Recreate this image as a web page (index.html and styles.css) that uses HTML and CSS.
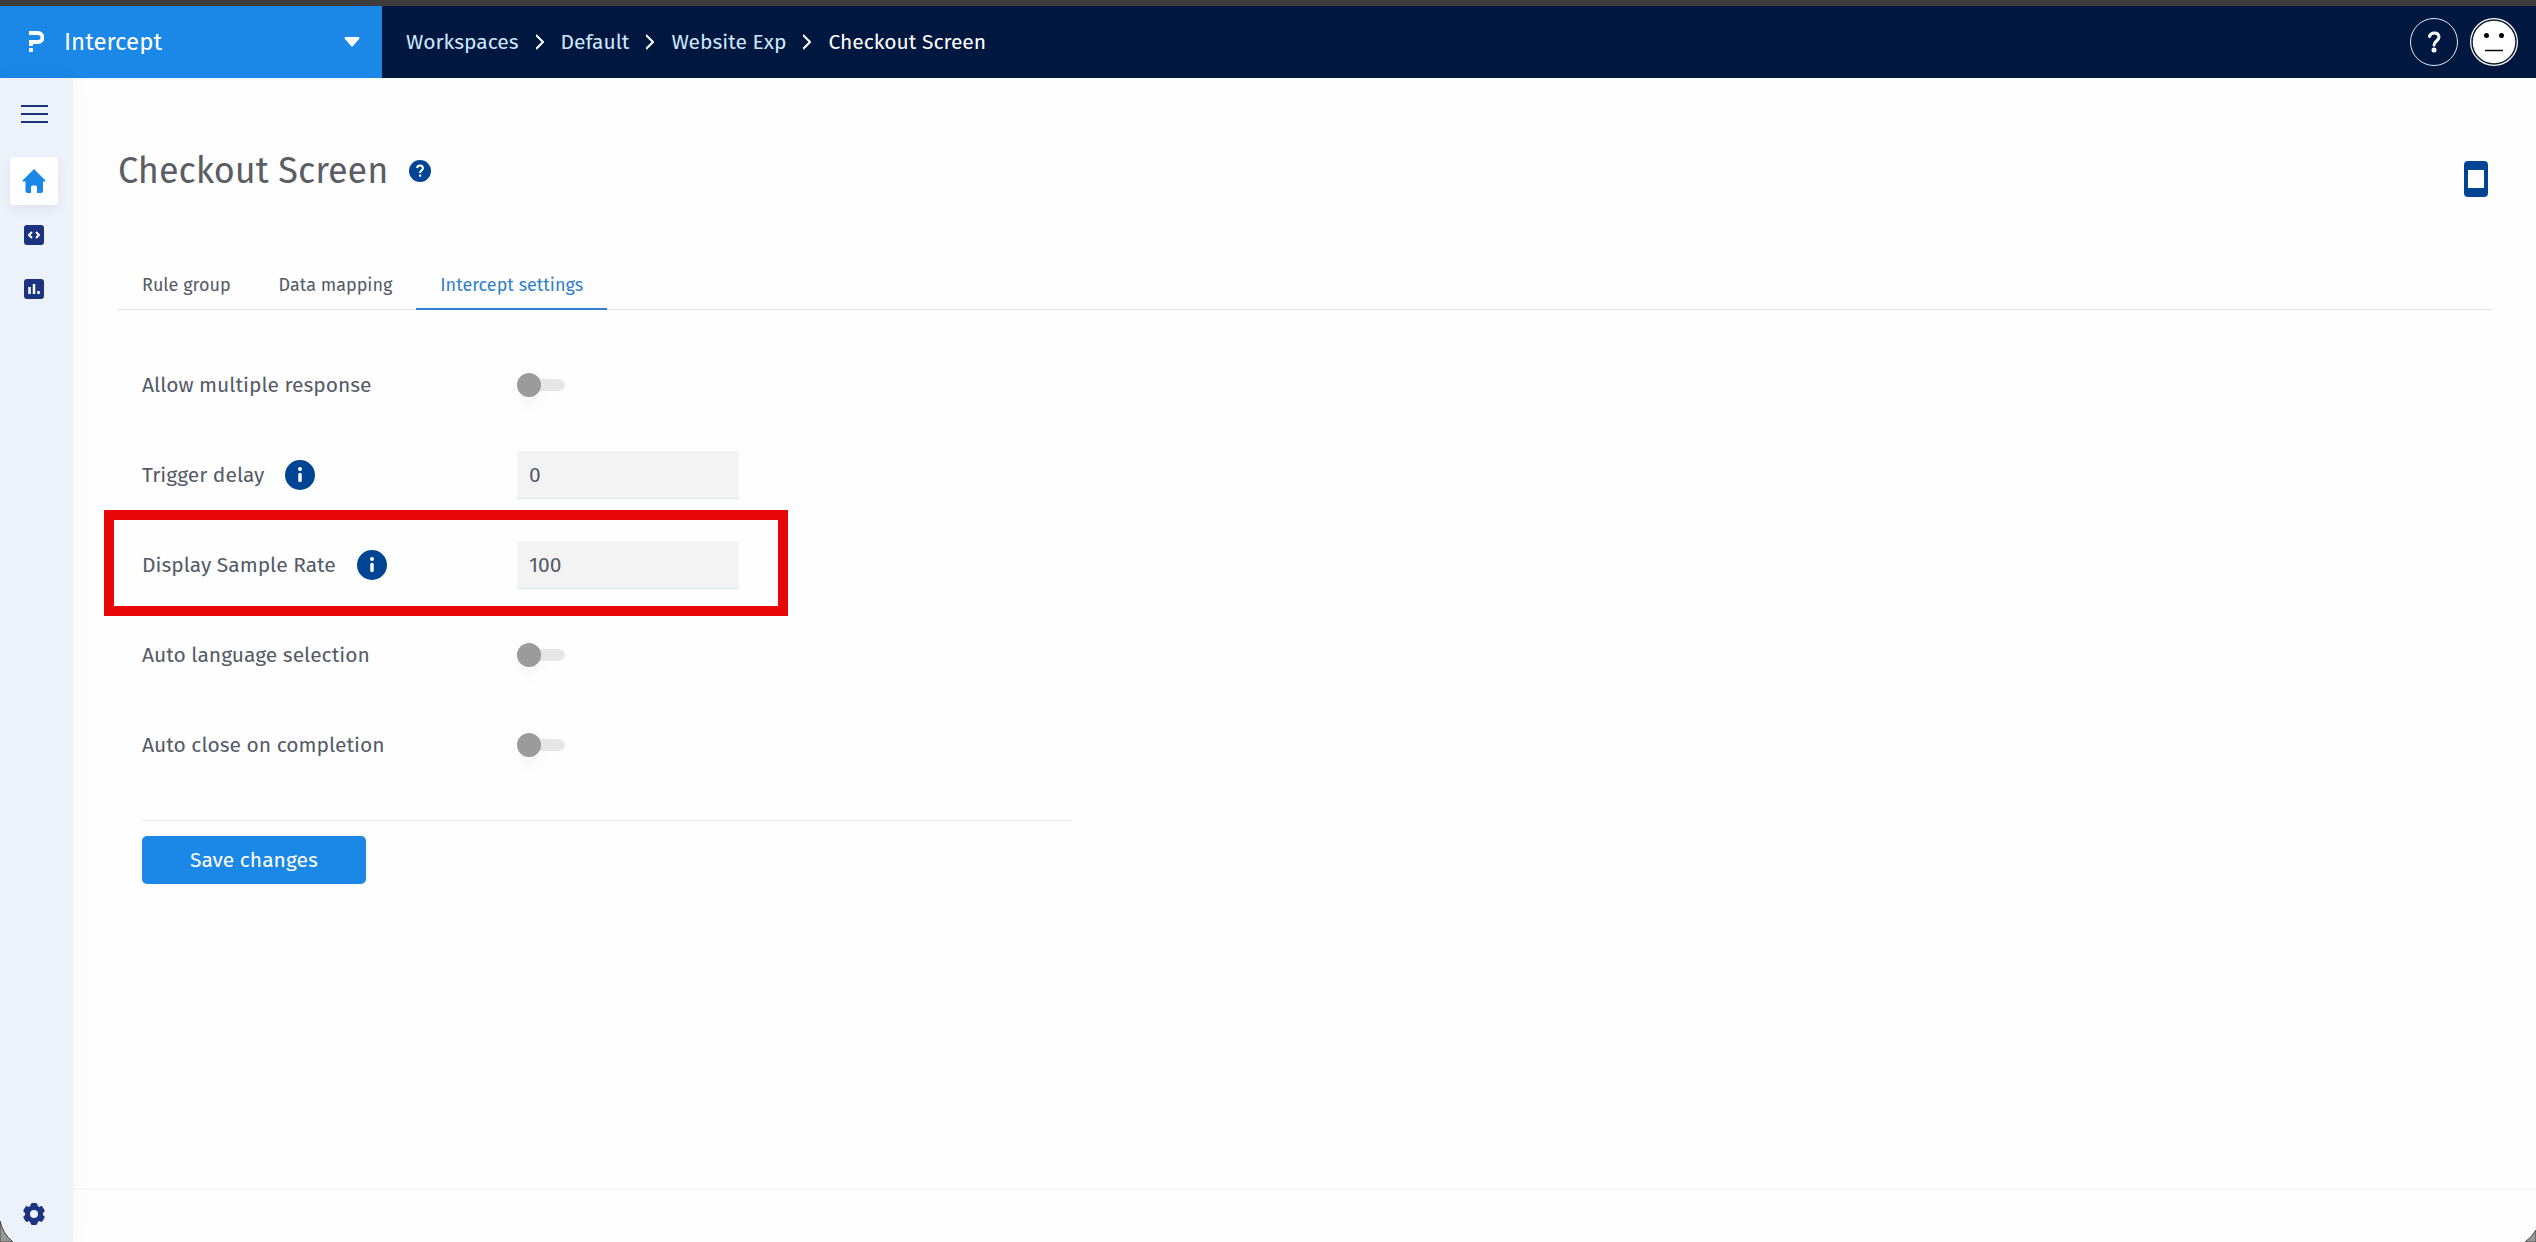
FILE: index.html
```html
<!DOCTYPE html>
<html lang="en">
<head>
<meta charset="utf-8">
<title>Checkout Screen - Intercept settings</title>
<link rel="stylesheet" href="styles.css">
</head>
<body>
<header class="topbar">
  <div class="product">
    <svg class="product-logo" width="16" height="22" viewBox="0 0 16 22" aria-hidden="true"><path d="M1 2h9a4 4 0 0 1 0 9H3v4" fill="none" stroke="#fff" stroke-width="4"/><rect x="1" y="17" width="4" height="4" rx="1" fill="#fff"/></svg>
    <select class="product-select" aria-label="Product"><option>Intercept</option></select>
    <svg class="product-caret" width="16" height="10" viewBox="0 0 16 10" aria-hidden="true"><path d="M1 0h14q1 1 0 2L9 9q-1 1-2 0L1 2Q0 1 1 0z" fill="#fff"/></svg>
  </div>
  <nav class="crumbs" aria-label="Breadcrumb">
    <a href="#">Workspaces</a>
    <svg class="chevron" width="8" height="16" viewBox="0 0 8 16" aria-hidden="true"><path d="M0 1l7 7-7 7"/></svg>
    <a href="#">Default</a>
    <svg class="chevron" width="8" height="16" viewBox="0 0 8 16" aria-hidden="true"><path d="M0 1l7 7-7 7"/></svg>
    <a href="#">Website Exp</a>
    <svg class="chevron" width="8" height="16" viewBox="0 0 8 16" aria-hidden="true"><path d="M0 1l7 7-7 7"/></svg>
    <a class="current" href="#" aria-current="page">Checkout Screen</a>
  </nav>
  <div class="account">
    <button class="icon-button" type="button" aria-label="Help">
      <svg width="48" height="48" viewBox="0 0 48 48"><circle cx="24" cy="24" r="23.500" fill="none" stroke="#dfe8f8"/><path d="M19.500 18.500q1-3.500 5-3.500 4 0 4.500 4c0 4-5 4-5 8" fill="none" stroke="#fff" stroke-width="3" stroke-linecap="round"/><circle cx="24" cy="32" r="2.500" fill="#fff"/></svg>
    </button>
    <button class="icon-button" type="button" aria-label="Account">
      <svg width="48" height="48" viewBox="0 0 48 48"><circle cx="24" cy="24" r="24" fill="#fff"/><circle cx="24" cy="24" r="22" fill="#fff" stroke="#10182c" stroke-width="1.500"/><circle cx="16.500" cy="17.500" r="2.500"/><circle cx="31.500" cy="17.500" r="2.500"/><path d="M15 32.500h18" stroke="#000" stroke-width="1.500"/></svg>
    </button>
  </div>
</header>
<div class="shell">
  <nav class="sidebar" aria-label="Main">
    <button class="menu-button" type="button" aria-label="Menu">
      <svg width="28" height="18" viewBox="0 0 28 18"><path d="M0 1h27M0 9h27M0 17h27" stroke="#1b3478" stroke-width="2"/></svg>
    </button>
    <a class="side-link active" href="#" aria-label="Home">
      <svg width="24" height="24" viewBox="0 0 24 24"><path d="M12 0L.5 11.500Q0 12.500 1 12.500h2.500V22q0 2 2 2H9v-6q0-1.500 1.500-1.500h3Q15 16.500 15 18v6h4q2 0 2-2v-9.500h2q1 0 .5-1z" fill="#1b87e6"/></svg>
    </a>
    <a class="side-link" href="#" aria-label="Code">
      <svg width="20" height="20" viewBox="0 0 20 20"><rect width="20" height="20" rx="3" fill="#1b3380"/><path d="M8 7l-3 3 3 3M12 7l3 3-3 3" fill="none" stroke="#fff" stroke-width="2"/></svg>
    </a>
    <a class="side-link" href="#" aria-label="Reports">
      <svg width="20" height="20" viewBox="0 0 20 20"><rect width="20" height="20" rx="3" fill="#1b3380"/><path d="M5.500 8v7M10 5v10M14.500 12v3" stroke="#fff" stroke-width="2.500"/></svg>
    </a>
    <a class="side-link settings" href="#" aria-label="Settings">
      <svg width="22" height="22" viewBox="0 0 22 22"><g fill="#1b3380"><circle cx="11" cy="11" r="9"/><rect x="7.500" y="0" width="7" height="22" rx="2"/><rect x="7.500" y="0" width="7" height="22" rx="2" transform="rotate(60 11 11)"/><rect x="7.500" y="0" width="7" height="22" rx="2" transform="rotate(120 11 11)"/></g><circle cx="11" cy="11" r="4" fill="#eef2fb"/></svg>
    </a>
  </nav>
  <div class="page">
    <main class="content">
      <div class="title-row">
        <h1>Checkout Screen</h1>
        <button class="icon-button" type="button" aria-label="About this screen">
          <svg width="22" height="22" viewBox="0 0 22 22"><circle cx="11" cy="11" r="11" fill="#004593"/><path d="M8 8q.5-2.500 3-2.500T14 8c0 2.500-3 2.500-3 5" fill="none" stroke="#fff" stroke-width="2"/><rect x="10" y="14.500" width="2.200" height="2.200" fill="#fff"/></svg>
        </button>
        <button class="icon-button device" type="button" aria-label="Mobile preview">
          <svg width="24" height="36" viewBox="0 0 24 36"><rect width="24" height="36" rx="4" fill="#004593"/><rect x="4" y="9" width="16" height="18" fill="#fff"/></svg>
        </button>
      </div>
      <nav class="tabs" aria-label="Sections">
        <a href="#">Rule group</a>
        <a href="#">Data mapping</a>
        <a class="active" href="#" aria-current="page">Intercept settings</a>
      </nav>
      <form class="settings-form">
        <div class="row">
          <div class="caption"><label for="multi">Allow multiple response</label></div>
          <input class="toggle" id="multi" type="checkbox">
        </div>
        <div class="row">
          <div class="caption"><label for="delay">Trigger delay</label>
            <button class="icon-button" type="button" aria-label="About trigger delay"><svg width="30" height="30" viewBox="0 0 30 30"><circle cx="15" cy="15" r="15" fill="#004593"/><circle cx="15" cy="9" r="2" fill="#fff"/><path d="M15 14.500v6" stroke="#fff" stroke-width="3.500" stroke-linecap="round"/></svg></button>
          </div>
          <input class="field" id="delay" type="text" value="0">
        </div>
        <div class="row highlighted">
          <div class="caption"><label for="rate">Display Sample Rate</label>
            <button class="icon-button" type="button" aria-label="About display sample rate"><svg width="30" height="30" viewBox="0 0 30 30"><circle cx="15" cy="15" r="15" fill="#004593"/><circle cx="15" cy="9" r="2" fill="#fff"/><path d="M15 14.500v6" stroke="#fff" stroke-width="3.500" stroke-linecap="round"/></svg></button>
          </div>
          <input class="field" id="rate" type="text" value="100">
        </div>
        <div class="row">
          <div class="caption"><label for="lang">Auto language selection</label></div>
          <input class="toggle" id="lang" type="checkbox">
        </div>
        <div class="row">
          <div class="caption"><label for="close">Auto close on completion</label></div>
          <input class="toggle" id="close" type="checkbox">
        </div>
        <div class="actions"><button class="save" type="submit">Save changes</button></div>
      </form>
    </main>
    <footer class="footer"></footer>
  </div>
</div>
<svg class="corner corner-left" width="14" height="22" viewBox="0 0 14 22" aria-hidden="true"><path d="M0 1Q3 14 13 22H0z" fill="#999" stroke="#444"/></svg>
<svg class="corner corner-right" width="12" height="12" viewBox="0 0 12 12" aria-hidden="true"><path d="M12 0Q8 7 1 12H12z" fill="#999" stroke="#444"/></svg>
</body>
</html>
```
FILE: styles.css
```css
*, *::before, *::after { box-sizing: border-box; }

body {
  margin: 0;
  min-height: 100vh;
  display: flex;
  flex-direction: column;
  position: relative;
  border-top: 6px solid #3f3d3c;
  background: #fefefe;
  color: #545b67;
  font-family: "Fira Sans", Roboto, sans-serif;
  font-size: 21px;
  line-height: 24px;
}

a { color: inherit; text-decoration: none; }
svg { display: block; flex: none; }

.icon-button {
  flex: none;
  padding: 0;
  border: 0;
  background: none;
}

/* Top bar */
.topbar {
  display: flex;
  height: 72px;
  background: #001740;
}
.product {
  display: flex;
  align-items: center;
  width: 382px;
  padding: 0 22px 0 28px;
  background: #1b87e6;
}
.product-select {
  flex: 1;
  margin-left: 20px;
  padding: 0;
  border: 0;
  appearance: none;
  background: none;
  color: #fff;
  font: inherit;
  font-size: 24px;
}
.crumbs {
  display: flex;
  align-items: center;
  gap: 17px;
  padding-left: 24px;
  color: #cfe6ff;
}
.crumbs .current { color: #fff; }
.chevron { fill: none; stroke: #fff; stroke-width: 2; }
.account {
  display: flex;
  align-items: center;
  gap: 12px;
  margin-left: auto;
  padding-right: 18px;
}

/* Side navigation */
.shell { display: flex; flex: 1; }
.sidebar {
  display: flex;
  flex-direction: column;
  gap: 6px;
  width: 73px;
  padding: 27px 0 4px 10px;
  background: #edf1fa;
  box-shadow: 0 0 24px rgba(30, 50, 90, 0.04);
}
.menu-button {
  margin-bottom: 28px;
  padding: 0 0 0 11px;
  border: 0;
  background: none;
}
.side-link {
  display: flex;
  align-items: center;
  justify-content: center;
  width: 48px;
  height: 48px;
  border-radius: 4px;
}
.side-link.active {
  background: #fff;
  box-shadow: 0 4px 12px rgba(30, 50, 90, 0.08);
}
.side-link.settings { margin-top: auto; }

/* Page */
.page {
  display: flex;
  flex: 1;
  flex-direction: column;
}
.content {
  flex: 1;
  padding: 68px 43px 0 45px;
}
.title-row {
  display: flex;
  align-items: center;
  gap: 21px;
  height: 50px;
}
h1 {
  margin: 0;
  color: #5a5e64;
  font-size: 36px;
  font-weight: 400;
  line-height: 48px;
}
.device { margin: 16px 5px 0 auto; }
.tabs {
  display: flex;
  margin-top: 66px;
  border-bottom: 1px solid #dfe4e8;
  font-size: 18px;
}
.tabs a {
  margin-bottom: -1px;
  padding: 11px 24px;
  border-bottom: 2px solid transparent;
}
.tabs .active { border-color: #2f7fcb; color: #2f7fcb; }

/* Settings form */
.settings-form {
  max-width: 953px;
  padding: 30px 0 0 24px;
}
.row {
  display: grid;
  grid-template-columns: 375px 222px;
  align-items: center;
  height: 90px;
  position: relative;
}
.caption { display: flex; align-items: center; gap: 21px; }
.field {
  height: 48px;
  padding: 0 12px;
  border: 0;
  border-bottom: 1px solid #dbe4e8;
  background: #f3f3f3;
  color: #545b67;
  font: inherit;
}
.toggle {
  width: 48px;
  height: 12px;
  margin: 0;
  display: flex;
  align-items: center;
  appearance: none;
  border-radius: 6px;
  background: #e6e6e6;
}
.toggle::before {
  content: "";
  flex: none;
  width: 24px;
  height: 24px;
  border-radius: 50%;
  background: #9b9b9b;
  box-shadow: 0 10px 12px rgba(0, 0, 0, 0.03);
}
.toggle:checked { justify-content: flex-end; }
.highlighted::after {
  content: "";
  position: absolute;
  inset: -10px auto -6px -38px;
  width: 684px;
  border: 10px solid #e80707;
  pointer-events: none;
}
.actions {
  margin-top: 30px;
  padding-top: 15px;
  border-top: 1px solid #e4e6e8;
}
.save {
  height: 48px;
  padding: 0 48px;
  border: 0;
  border-radius: 5px;
  background: #1b87e6;
  color: #fff;
  font: inherit;
}
.footer { height: 54px; border-top: 2px solid #f6f6f7; }

/* Rounded window corners */
.corner { position: absolute; bottom: 0; }
.corner-left { left: 0; }
.corner-right { right: 0; }
```
